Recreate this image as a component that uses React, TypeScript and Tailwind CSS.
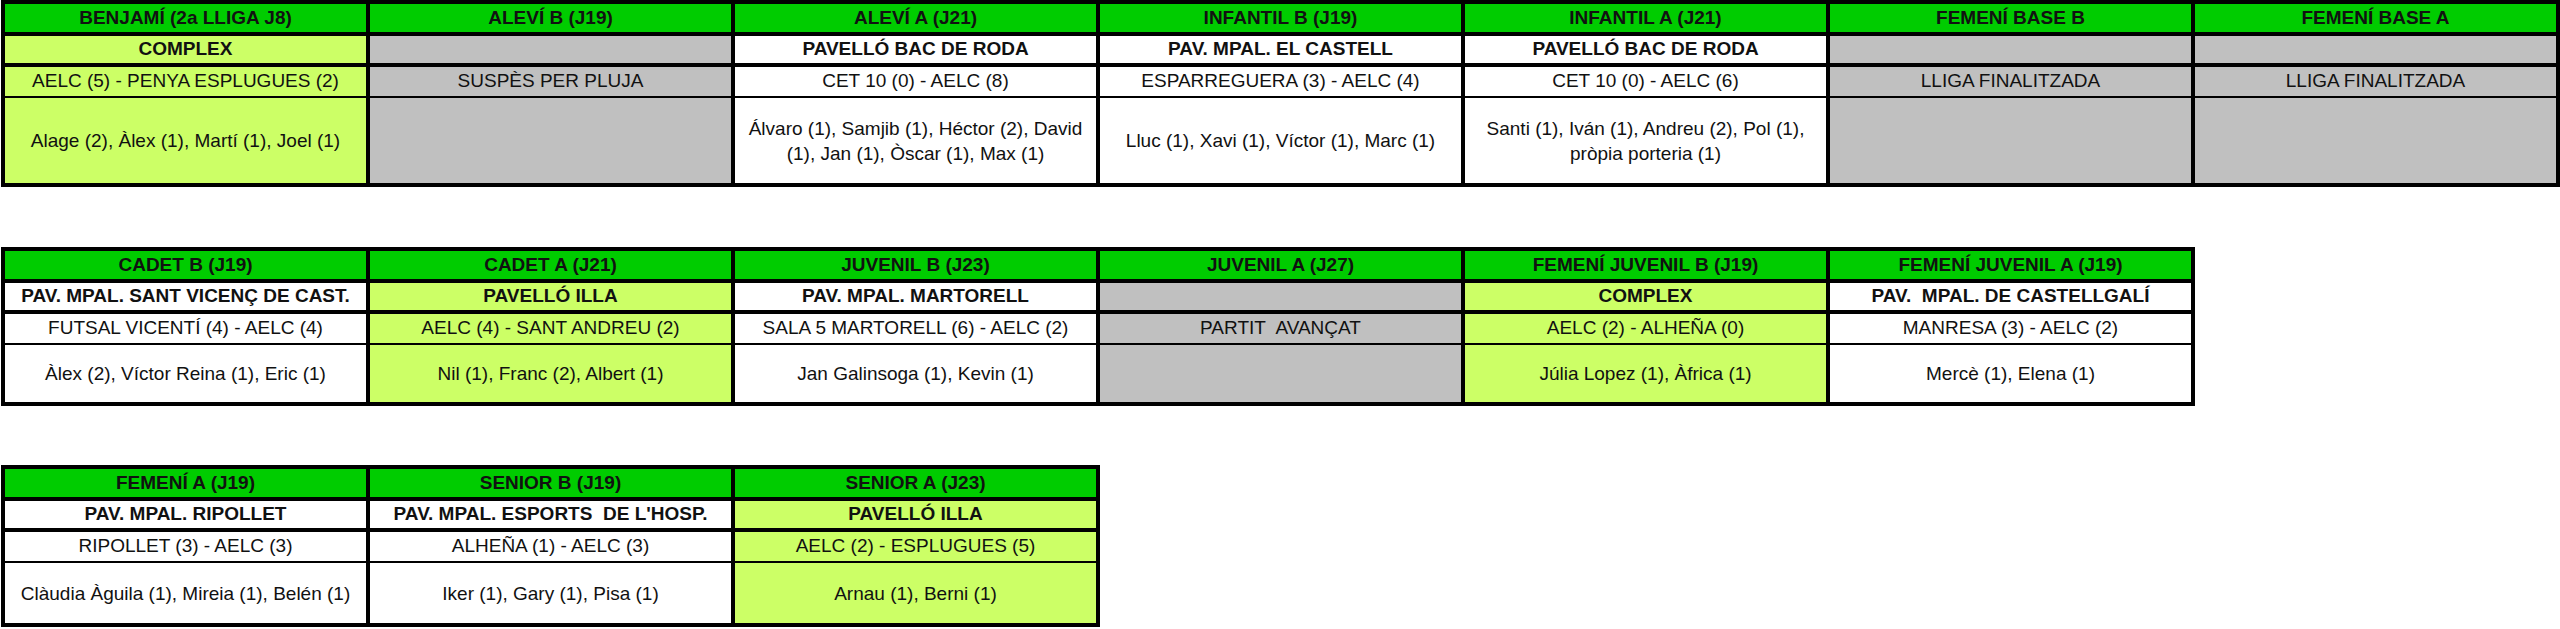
import React from 'react';

type Tone = 'lime' | 'white' | 'gray';

interface Match {
    team: string;
    tone: Tone;
    venue: string;
    score: string;
    goals: string[];
}

const toneBg: Record<Tone, string> = {
    lime: 'bg-[#ccff66]',
    white: 'bg-white',
    gray: 'bg-[#c0c0c0]',
};

const row1: Match[] = [
    { team: 'BENJAMÍ (2a LLIGA J8)', tone: 'lime', venue: 'COMPLEX', score: 'AELC (5) - PENYA ESPLUGUES (2)', goals: ['Alage (2), Àlex (1), Martí (1), Joel (1)'] },
    { team: 'ALEVÍ B (J19)', tone: 'gray', venue: '', score: 'SUSPÈS PER PLUJA', goals: [] },
    { team: 'ALEVÍ A (J21)', tone: 'white', venue: 'PAVELLÓ BAC DE RODA', score: 'CET 10 (0) - AELC (8)', goals: ['Álvaro (1), Samjib (1), Héctor (2), David', '(1), Jan (1), Òscar (1), Max (1)'] },
    { team: 'INFANTIL B (J19)', tone: 'white', venue: 'PAV. MPAL. EL CASTELL', score: 'ESPARREGUERA (3) - AELC (4)', goals: ['Lluc (1), Xavi (1), Víctor (1), Marc (1)'] },
    { team: 'INFANTIL A (J21)', tone: 'white', venue: 'PAVELLÓ BAC DE RODA', score: 'CET 10 (0) - AELC (6)', goals: ['Santi (1), Iván (1), Andreu (2), Pol (1),', 'pròpia porteria (1)'] },
    { team: 'FEMENÍ BASE B', tone: 'gray', venue: '', score: 'LLIGA FINALITZADA', goals: [] },
    { team: 'FEMENÍ BASE A', tone: 'gray', venue: '', score: 'LLIGA FINALITZADA', goals: [] },
];

const row2: Match[] = [
    { team: 'CADET B (J19)', tone: 'white', venue: 'PAV. MPAL. SANT VICENÇ DE CAST.', score: 'FUTSAL VICENTÍ (4) - AELC (4)', goals: ['Àlex (2), Víctor Reina (1), Eric (1)'] },
    { team: 'CADET A (J21)', tone: 'lime', venue: 'PAVELLÓ ILLA', score: 'AELC (4) - SANT ANDREU (2)', goals: ['Nil (1), Franc (2), Albert (1)'] },
    { team: 'JUVENIL B (J23)', tone: 'white', venue: 'PAV. MPAL. MARTORELL', score: 'SALA 5 MARTORELL (6) - AELC (2)', goals: ['Jan Galinsoga (1), Kevin (1)'] },
    { team: 'JUVENIL A (J27)', tone: 'gray', venue: '', score: 'PARTIT\u00a0 AVANÇAT', goals: [] },
    { team: 'FEMENÍ JUVENIL B (J19)', tone: 'lime', venue: 'COMPLEX', score: 'AELC (2) - ALHEÑA (0)', goals: ['Júlia Lopez (1), Àfrica (1)'] },
    { team: 'FEMENÍ JUVENIL A (J19)', tone: 'white', venue: 'PAV.\u00a0 MPAL. DE CASTELLGALÍ', score: 'MANRESA (3) - AELC (2)', goals: ['Mercè (1), Elena (1)'] },
];

const row3: Match[] = [
    { team: 'FEMENÍ A (J19)', tone: 'white', venue: 'PAV. MPAL. RIPOLLET', score: 'RIPOLLET (3) - AELC (3)', goals: ['Clàudia Àguila (1), Mireia (1), Belén (1)'] },
    { team: 'SENIOR B (J19)', tone: 'white', venue: "PAV. MPAL. ESPORTS\u00a0 DE L'HOSP.", score: 'ALHEÑA (1) - AELC (3)', goals: ['Iker (1), Gary (1), Pisa (1)'] },
    { team: 'SENIOR A (J23)', tone: 'lime', venue: 'PAVELLÓ ILLA', score: 'AELC (2) - ESPLUGUES (5)', goals: ['Arnau (1), Berni (1)'] },
];

const ResultsTable: React.FC<{ matches: Match[]; goalsHeight: string; className?: string }> = ({ matches, goalsHeight, className = '' }) => (
    <div className={`ml-[1px] w-fit bg-black p-[4px] flex flex-col ${className}`}>
        <div className="flex gap-[4px] h-[28px]">
            {matches.map(m => (
                <div key={m.team} className="w-[361px] bg-[#00cc00] flex items-center justify-center font-bold text-[19px] text-[#111]">
                    {m.team}
                </div>
            ))}
        </div>
        <div className="flex gap-[4px] h-[27px] mt-[4px]">
            {matches.map(m => (
                <div key={m.team} className={`w-[361px] ${toneBg[m.tone]} flex items-center justify-center font-bold text-[19px] text-[#111] whitespace-nowrap`}>
                    {m.venue}
                </div>
            ))}
        </div>
        <div className="flex gap-[4px] h-[29px] mt-[4px]">
            {matches.map(m => (
                <div key={m.team} className={`w-[361px] ${toneBg[m.tone]} flex items-center justify-center text-[19px] text-[#111] whitespace-nowrap`}>
                    {m.score}
                </div>
            ))}
        </div>
        <div className={`flex gap-[4px] mt-[2px] ${goalsHeight}`}>
            {matches.map(m => (
                <div key={m.team} className={`w-[361px] ${toneBg[m.tone]} flex flex-col items-center justify-center text-[19px] leading-[25px] text-[#111]`}>
                    {m.goals.map(line => (
                        <span key={line}>{line}</span>
                    ))}
                </div>
            ))}
        </div>
    </div>
);

export default function App() {
    return (
        <div className="w-[2560px] h-[629px] bg-white overflow-hidden font-['Liberation_Sans',Arial,sans-serif]">
            <ResultsTable matches={row1} goalsHeight="h-[85px]" />
            <ResultsTable matches={row2} goalsHeight="h-[57px]" className="mt-[60px]" />
            <ResultsTable matches={row3} goalsHeight="h-[60px]" className="mt-[59px]" />
        </div>
    );
}
